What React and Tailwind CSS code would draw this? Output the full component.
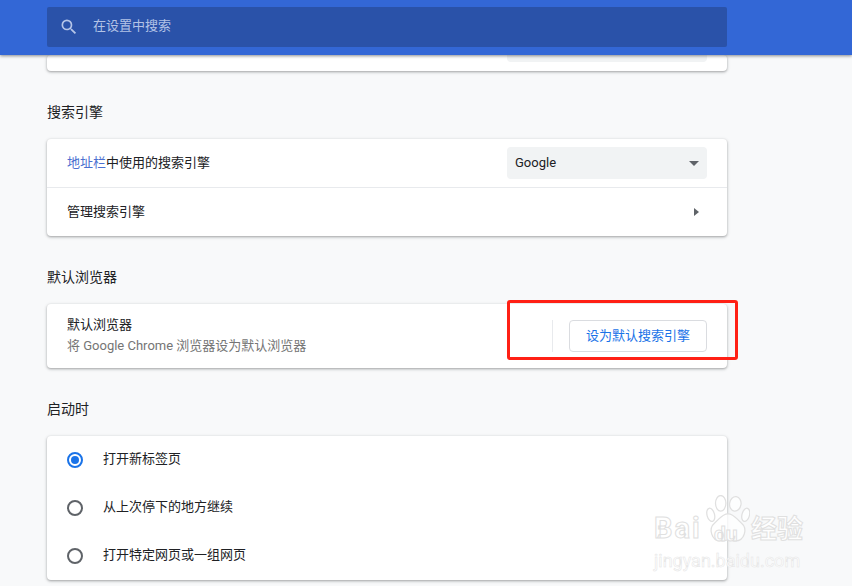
const font = { fontFamily: '"Roboto","Noto Sans CJK SC",sans-serif' };

function Radio({ checked }) {
  return (
    <span className={`flex h-4 w-4 items-center justify-center rounded-full border-2 ${checked ? "border-[#1a73e8]" : "border-[#5f6368]"}`}>
      {checked && <span className="h-2 w-2 rounded-full bg-[#1a73e8]" />}
    </span>
  );
}

function RadioRow({ checked, label }) {
  return (
    <div className="flex h-12 items-center pl-5">
      <Radio checked={checked} />
      <span className="ml-5 -translate-y-px text-[13px] text-[#202124]">{label}</span>
    </div>
  );
}

const cardClass = "w-[680px] rounded bg-white shadow-[0_1px_2px_rgba(60,64,67,0.3),0_1px_3px_1px_rgba(60,64,67,0.15)]";

function Title({ children, className }) {
  return <h2 className={`ml-[47px] text-[14px] leading-5 font-normal text-[#202124] ${className}`}>{children}</h2>;
}

export default function App() {
  return (
    <div style={font} className="relative h-[586px] w-[852px] overflow-hidden bg-[#f8f9fa]">
      <header className="relative z-10 h-[55px] bg-[#3367d6] pt-[7px] pl-[47px] shadow-[0_1px_3px_rgba(60,64,67,0.6)]">
        <div className="flex h-10 w-[680px] items-center rounded-[2px] bg-[#2a52a9] pl-3">
          <svg width="20" height="20" viewBox="0 0 24 24" fill="#b5c5e8">
            <path d="M15.5 14h-.79l-.28-.27A6.47 6.47 0 0 0 16 9.5 6.5 6.5 0 1 0 9.5 16c1.61 0 3.09-.59 4.23-1.57l.27.28v.79l5 4.99L20.49 19l-4.99-5zm-6 0C7.01 14 5 11.99 5 9.5S7.01 5 9.5 5 14 7.01 14 9.5 11.99 14 9.5 14z" />
          </svg>
          <span className="ml-[14px] -translate-y-px text-[13px] text-[#b3c3e6]">在设置中搜索</span>
        </div>
      </header>

      <main>
        <div className={`${cardClass} ml-[47px] flex h-4 justify-end pr-5`}>
          <div className="h-[7px] w-[200px] rounded-b bg-[#f1f3f4]" />
        </div>

        <Title className="mt-[31px]">搜索引擎</Title>
        <section className={`${cardClass} mt-[17px] ml-[47px]`}>
          <div className="flex h-[49px] items-center justify-between border-b border-[#e8eaed] pr-5 pl-5">
            <span className="text-[13px] text-[#202124]">
              <span className="text-[#4a6fd0]">地址栏</span>中使用的搜索引擎
            </span>
            <div className="flex h-8 w-[200px] items-center justify-between rounded bg-[#f1f3f4] pr-2 pl-2 text-[13px] text-[#202124]">
              Google
              <svg width="10" height="5" viewBox="0 0 10 5" fill="#5f6368"><path d="M0 0h10L5 5z" /></svg>
            </div>
          </div>
          <div className="flex h-12 items-center justify-between pr-7 pl-5">
            <span className="text-[13px] text-[#202124]">管理搜索引擎</span>
            <svg width="5" height="8" viewBox="0 0 5 8" fill="#5f6368"><path d="M0 0l5 4-5 4z" /></svg>
          </div>
        </section>

        <Title className="mt-[31px]">默认浏览器</Title>
        <section className={`${cardClass} mt-[17px] ml-[47px] flex h-16 items-center justify-between pr-5 pl-5`}>
          <div className="text-[13px] leading-5">
            <div className="-translate-y-px text-[#202124]">默认浏览器</div>
            <div className="text-[#757575]">将 Google Chrome 浏览器设为默认浏览器</div>
          </div>
          <div className="flex items-center">
            <div className="mr-4 h-8 w-px bg-[#e8eaed]" />
            <button className="h-8 w-[138px] rounded border border-[#dadce0] bg-white pb-px text-[13px] text-[#1a73e8]">设为默认搜索引擎</button>
          </div>
        </section>

        <Title className="mt-[31px]">启动时</Title>
        <section className={`${cardClass} mt-[17px] ml-[47px]`}>
          <RadioRow checked label="打开新标签页" />
          <RadioRow label="从上次停下的地方继续" />
          <RadioRow label="打开特定网页或一组网页" />
        </section>
      </main>

      <div className="absolute top-[300px] left-[507px] z-20 h-[60px] w-[231px] rounded-[3px] border-[3px] border-[#ff2015]" />

      <div className="pointer-events-none absolute top-[493px] left-[652px] z-20 h-[84px] w-[170px]">
        <svg className="absolute top-[2px] left-[54px]" width="44" height="48" viewBox="0 0 42 46" fill="#ffffff" fillOpacity="0.75" stroke="#e0e0e0" strokeWidth="1.2">
          <ellipse cx="14" cy="8" rx="5" ry="7.5" />
          <ellipse cx="28" cy="8.5" rx="5.5" ry="7" transform="rotate(8 28 8.5)" />
          <ellipse cx="38" cy="19" rx="3.6" ry="6.5" transform="rotate(15 38 19)" />
          <ellipse cx="4.5" cy="19" rx="3.6" ry="6.5" transform="rotate(-15 4.5 19)" />
          <path d="M21 18c6 0 8 5 13 9 6 5 3 17-6 17-3 0-5-1-7-1s-4 1-7 1c-9 0-12-12-6-17 5-4 7-9 13-9z" />
        </svg>
        <span style={{ WebkitTextStroke: "1px #e0e0e0" }} className="absolute top-[15px] left-[2px] text-[29px] leading-10 font-bold tracking-[2px] text-white/80">Bai</span>
        <span style={{ WebkitTextStroke: "1px #e0e0e0" }} className="absolute top-[27px] left-[62px] text-[21px] leading-7 font-bold text-white/80">du</span>
        <span style={{ WebkitTextStroke: "1px #e0e0e0" }} className="absolute top-[20px] left-[99px] text-[26px] leading-8 font-bold text-white/80">经验</span>
        <span style={{ WebkitTextStroke: "0.5px #e4e4e4" }} className="absolute top-[56px] left-[2px] text-[18px] leading-6 text-white/80">jingyan.baidu.com</span>
      </div>
    </div>
  );
}
